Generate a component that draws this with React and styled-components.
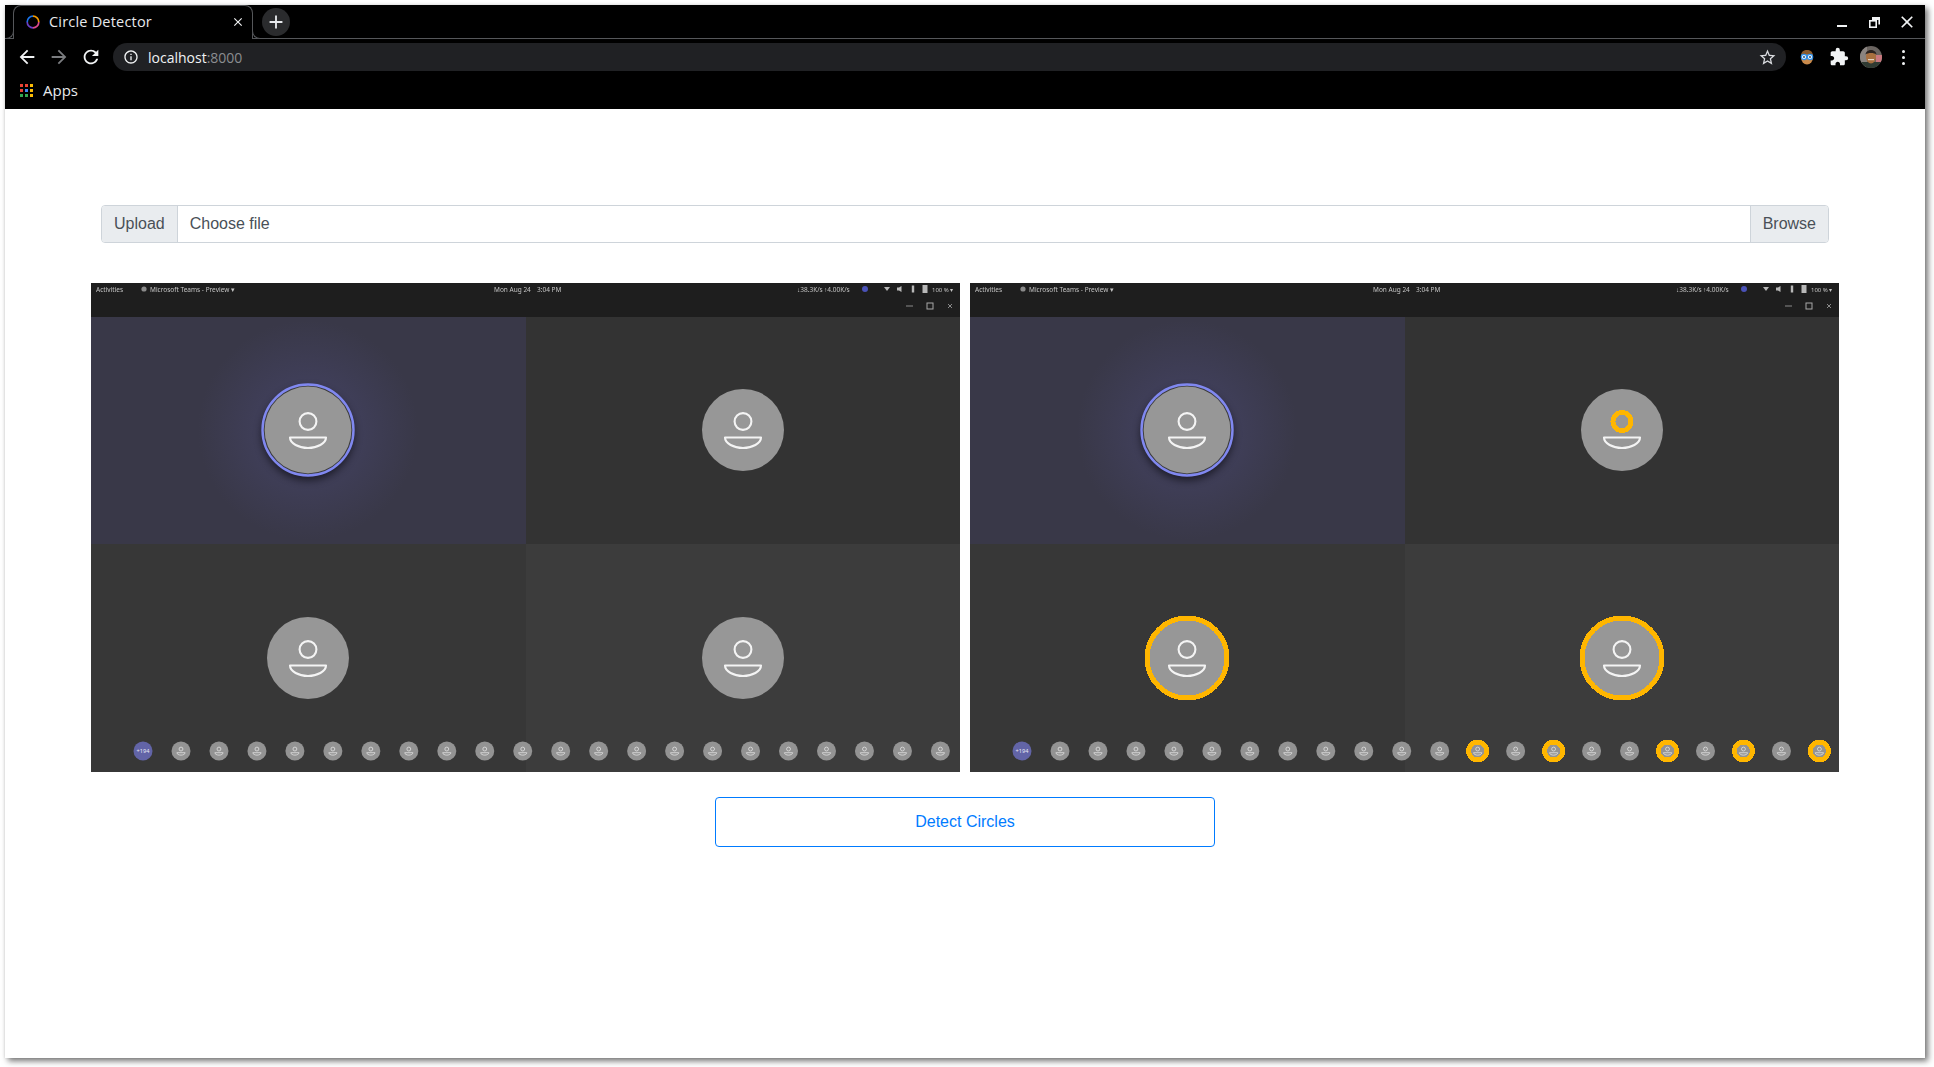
import React from 'react';
import styled, { createGlobalStyle } from 'styled-components';
import { MdArrowBack, MdArrowForward, MdRefresh, MdInfoOutline, MdStarBorder, MdExtension, MdClose, MdAdd } from 'react-icons/md';

const Global = createGlobalStyle`
  html, body { margin: 0; padding: 0; background: #fff; }
  body { width: 1934px; height: 1067px; overflow: hidden; }
`;

const Desktop = styled.div`
  box-sizing: border-box;
  width: 1934px;
  height: 1067px;
  padding: 5px 9px 9px 5px;
  background: #fff;
`;
const Win = styled.div`
  height: 100%;
  display: flex;
  flex-direction: column;
  background: #fff;
  box-shadow: 3px 3px 6px rgba(0,0,0,.55), -1px 0 2px rgba(0,0,0,.06);
`;
const Chrome = styled.header`
  background: #000;
  height: 104px;
  flex: none;
  font-family: "Open Sans", "Noto Sans", sans-serif;
  color: #e8eaed;
`;
const TabStrip = styled.div`
  box-sizing: border-box;
  height: 34px;
  display: flex;
  align-items: flex-start;
  padding-left: 8px;
  border-bottom: 1px solid #55575a;
`;
const Tab = styled.div`
  position: relative;
  box-sizing: border-box;
  width: 240px;
  height: 34px;
  display: flex;
  align-items: center;
  padding: 0 7px 2px 12px;
  background: #000;
  border: 1px solid #55575a;
  border-bottom: none;
  border-radius: 8px 8px 0 0;
  &::before, &::after {
    content: '';
    position: absolute;
    bottom: 0;
    width: 8px;
    height: 8px;
    background: #000;
    border-bottom: 1px solid #55575a;
  }
  &::before { left: -9px; border-right: 1px solid #55575a; border-bottom-right-radius: 8px; }
  &::after { right: -9px; border-left: 1px solid #55575a; border-bottom-left-radius: 8px; }
`;
const TabTitle = styled.span`
  flex: 1;
  margin-left: 9px;
  font-size: 14.5px;
  letter-spacing: .2px;
  white-space: nowrap;
`;
const NewTab = styled.div`
  width: 28px;
  height: 28px;
  margin: 3px 0 0 9px;
  border-radius: 50%;
  background: #2a2b2d;
  display: flex;
  align-items: center;
  justify-content: center;
  color: #e8eaed;
  font-size: 22px;
`;
const WinControls = styled.div`
  margin-left: auto;
  display: flex;
  align-items: center;
  height: 33px;
  padding-right: 8px;
  gap: 14px;
`;
const Toolbar = styled.div`
  height: 36px;
  display: flex;
  align-items: center;
  padding: 0 11px 0 10px;
`;
const NavBtn = styled.div`
  width: 24px;
  height: 24px;
  margin-right: 8px;
  display: flex;
  align-items: center;
  justify-content: center;
  font-size: 22px;
  color: ${p => p.$dim ? '#7b7d80' : '#f1f3f4'};
`;
const Omnibox = styled.div`
  flex: 1;
  height: 28px;
  margin: 0 10px 0 2px;
  border-radius: 14px;
  background: #202124;
  display: flex;
  align-items: center;
  padding: 0 9px 0 10px;
  font-size: 14px;
`;
const Url = styled.span`
  margin-left: 9px;
  color: #f1f3f4;
  flex: 1;
  em { font-style: normal; color: #8b8d90; }
`;
const ToolIcons = styled.div`
  display: flex;
  align-items: center;
  gap: 10px;
`;
const Slot = styled.div`
  width: 22px;
  height: 24px;
  display: flex;
  align-items: center;
  justify-content: center;
  font-size: 22px;
  color: #f1f3f4;
`;
const Dots = styled.div`
  display: flex;
  flex-direction: column;
  gap: 3px;
  i { display: block; width: 3px; height: 3px; background: #f1f3f4; border-radius: 50%; }
`;
const Bookmarks = styled.div`
  height: 30px;
  display: flex;
  align-items: center;
  padding-left: 15px;
  font-size: 15px;
  gap: 10px;
`;
const AppsGrid = styled.div`
  display: grid;
  grid-template-columns: repeat(3, 3px);
  grid-auto-rows: 3px;
  gap: 2px;
`;
const AppsDot = styled.i`
  display: block;
  background: ${p => p.$c};
`;

const Main = styled.main`
  flex: 1;
  display: flex;
  flex-direction: column;
  padding: 96px 86px 0;
  font-family: "Liberation Sans", Arial, sans-serif;
  font-size: 16px;
  line-height: 24px;
`;
const FileGroup = styled.div`
  box-sizing: border-box;
  height: 38px;
  margin: 0 10px 40px;
  display: flex;
  color: #495057;
  border: 1px solid #ced4da;
  border-radius: 4px;
  overflow: hidden;
`;
const Addon = styled.div`
  background: #e9ecef;
  padding: 6px 12px;
  ${p => p.$end ? 'border-left: 1px solid #ced4da;' : 'border-right: 1px solid #ced4da;'}
`;
const FileLabel = styled.div`
  flex: 1;
  padding: 6px 12px;
`;
const Shots = styled.div`
  display: grid;
  grid-template-columns: 869px 869px;
  gap: 10px;
`;
const ShotSvg = styled.svg`
  display: block;
  width: 869px;
  height: 489px;
`;
const Fuzzy = styled.g`
  filter: blur(.4px);
`;
const BarText = styled.text`
  font-family: "Noto Sans", sans-serif;
  font-size: ${p => p.$size || 6.5}px;
  fill: #c4c4c4;
`;
const DetectBtn = styled.button`
  display: block;
  width: 500px;
  height: 50px;
  margin: 25px auto 0;
  background: #fff;
  border: 1px solid #007bff;
  border-radius: 4px;
  color: #007bff;
  font: inherit;
`;

const Favicon = () => (
  <svg width="14" height="14" viewBox="0 0 14 14" fill="none" strokeWidth="1.7">
    <path d="M7 1.2A5.8 5.8 0 0 1 12.8 7" stroke="#f29900" />
    <path d="M12.8 7A5.8 5.8 0 0 1 7 12.8" stroke="#d9488b" />
    <path d="M7 12.8A5.8 5.8 0 0 1 1.2 7" stroke="#6a3fc4" />
    <path d="M1.2 7A5.8 5.8 0 0 1 7 1.2" stroke="#1a73e8" />
  </svg>
);
const MinIcon = () => (
  <svg width="18" height="18" viewBox="0 0 18 18"><rect x="4" y="12" width="10" height="2" fill="#f1f3f4" /></svg>
);
const RestoreIcon = () => (
  <svg width="18" height="18" viewBox="0 0 18 18" fill="none" stroke="#f1f3f4" strokeWidth="1.6">
    <rect x="4.8" y="7.8" width="6.4" height="6.4" />
    <path d="M7.5 4.8h6.7v6.7" />
    <rect x="7" y="4" width="7.2" height="3" fill="#f1f3f4" stroke="none" />
  </svg>
);
const ExtIcon = () => (
  <svg width="16" height="16" viewBox="0 0 16 16">
    <ellipse cx="8" cy="8.5" rx="6" ry="7" fill="#c98a4b" />
    <path d="M2 7C2 2.5 5 1 8 1s6 1.5 6 6C11 5 5 5 2 7z" fill="#8a5a2b" />
    <circle cx="5" cy="8" r="2.7" fill="#e8f4ff" stroke="#2f8fe8" strokeWidth="1.2" />
    <circle cx="11" cy="8" r="2.7" fill="#e8f4ff" stroke="#2f8fe8" strokeWidth="1.2" />
    <circle cx="5" cy="8" r=".9" fill="#23415e" />
    <circle cx="11" cy="8" r=".9" fill="#23415e" />
  </svg>
);
const Profile = () => (
  <svg width="22" height="22" viewBox="0 0 22 22">
    <defs><clipPath id="pf"><circle cx="11" cy="11" r="11" /></clipPath></defs>
    <g clipPath="url(#pf)">
      <rect width="22" height="22" fill="#6a6460" />
      <rect x="0" y="0" width="7" height="22" fill="#8a8480" />
      <rect x="16" y="9" width="6" height="7" fill="#c9787e" />
      <rect x="0" y="16" width="22" height="6" fill="#2f3a32" />
      <ellipse cx="11" cy="11" rx="5" ry="6.5" fill="#a8703f" />
      <path d="M5.5 8.5C6 2.5 16 2.5 16.5 8.5 14 6.5 8 6.5 5.5 8.5z" fill="#2a2320" />
      <rect x="8" y="13" width="6" height="1.2" fill="#e3d6c6" />
    </g>
  </svg>
);

const GOLD = '#ffb600';

const Person = ({ x, y, scale = 1, sw = 2.1, color = '#f4f4f4' }) => (
  <g transform={`translate(${x} ${y}) scale(${scale})`} fill="none" stroke={color} strokeWidth={sw}>
    <circle cx="0" cy="-8.5" r="8.4" />
    <path d="M-18 7.5H18C18 13.5 9 18 0 18S-18 13.5-18 7.5Z" strokeLinejoin="round" />
  </g>
);
const GoldRing = ({ x, y, r, w }) => (
  <circle cx={x} cy={y} r={r} fill="none" stroke={GOLD} strokeWidth={w} shapeRendering="crispEdges" />
);
const BigAvatar = ({ x, y }) => (
  <>
    <circle cx={x} cy={y} r="41" fill="#979797" />
    <Person x={x} y={y} />
  </>
);
const STRIP = Array.from({ length: 21 }, (_, i) => 90 + i * 37.97);
const GOLD_STRIP = [11, 13, 16, 18, 20];
const TRAY = [[796, 'M-3 -2L3 -2L0 2Z'], [809, 'M-3 -1.5H-1L1.5 -3V3L-1 1.5H-3Z'], [822, 'M-1.2 -3.5H1.2V3.5H-1.2Z'], [834, 'M-2.5 -4H2.5V4H-2.5Z']];

const Shot = ({ id, detected }) => (
  <ShotSvg viewBox="0 0 869 489" role="img">
    <defs>
      <radialGradient id={`glow${id}`} gradientUnits="userSpaceOnUse" cx="217" cy="147" r="110">
        <stop offset="0.4" stopColor="#403f5a" />
        <stop offset="1" stopColor="#393848" />
      </radialGradient>
      <filter id={`sh${id}`} x="-40%" y="-40%" width="180%" height="180%"><feGaussianBlur stdDeviation="4" /></filter>
    </defs>
    <rect width="869" height="489" fill="#1e1e1e" />
    <rect x="0" y="34" width="435" height="227" fill="#393848" />
    <rect x="435" y="34" width="434" height="227" fill="#333333" />
    <rect x="0" y="261" width="435" height="228" fill="#373737" />
    <rect x="435" y="261" width="434" height="228" fill="#3c3c3c" />
    <rect x="100" y="34" width="235" height="227" fill={`url(#glow${id})`} />

    <Fuzzy>
      <BarText x="5" y="8.5">Activities</BarText>
      <circle cx="53" cy="6" r="2.6" fill="#8a8a8a" />
      <BarText x="59" y="8.5">Microsoft Teams - Preview ▾</BarText>
      <BarText x="403" y="8.5">Mon Aug 24</BarText>
      <BarText x="446" y="8.5">3:04 PM</BarText>
      <BarText x="706" y="8.5">↓38.3K/s</BarText>
      <BarText x="733" y="8.5">↑4.00K/s</BarText>
      <circle cx="774" cy="6" r="3" fill="#4a52b8" />
      {TRAY.map(([x, d]) => <path key={x} transform={`translate(${x} 6)`} d={d} fill="#b8b8b8" />)}
      <BarText x="841" y="8.5" $size={6}>100 % ▾</BarText>
      <rect x="815" y="22.5" width="7" height="1" fill="#8a8a8a" />
      <rect x="836" y="20" width="6" height="6" fill="none" stroke="#a8a8a8" />
      <path d="M857 21l4 4m0-4l-4 4" stroke="#8a8a8a" />
    </Fuzzy>

    <circle cx="217" cy="151" r="46" fill="#000" opacity=".6" filter={`url(#sh${id})`} />
    <circle cx="217" cy="147" r="45.5" fill="#3a3a3a" stroke="#8088f0" strokeWidth="2.4" />
    <circle cx="217" cy="147" r="43.4" fill="#979797" />
    <Person x={217} y={147} />
    <BigAvatar x={652} y={147} />
    <BigAvatar x={217} y={375} />
    <BigAvatar x={652} y={375} />

    <circle cx="52" cy="468" r="9.5" fill="#6264a7" />
    <BarText x="52" y="470" $size={5.6} textAnchor="middle" style={{ fill: '#e8e8f4' }}>+194</BarText>
    <Fuzzy>
      {STRIP.map((x, i) => (
        <g key={i}>
          <circle cx={x} cy="468" r="9.5" fill="#939393" />
          <Person x={x} y={468} scale={0.23} sw={3.4} color="#e4e4e4" />
        </g>
      ))}
    </Fuzzy>

    {detected && (
      <>
        <GoldRing x={652} y={138.5} r={9} w={5} />
        <GoldRing x={217} y={375} r={40} w={5} />
        <GoldRing x={652} y={375} r={40} w={5} />
        {GOLD_STRIP.map(i => <GoldRing key={i} x={STRIP[i]} y={468} r={9} w={5} />)}
      </>
    )}
  </ShotSvg>
);

const APPS = ['#ea4335', '#ea4335', '#fbbc04', '#ea4335', '#4285f4', '#fbbc04', '#34a853', '#34a853', '#fbbc04'];

export default function App() {
  return (
    <Desktop>
      <Global />
      <Win>
        <Chrome>
          <TabStrip>
            <Tab>
              <Favicon />
              <TabTitle>Circle Detector</TabTitle>
              <MdClose size={14} color="#f1f3f4" />
            </Tab>
            <NewTab><MdAdd /></NewTab>
            <WinControls>
              <MinIcon />
              <RestoreIcon />
              <MdClose size={20} color="#f1f3f4" />
            </WinControls>
          </TabStrip>
          <Toolbar>
            <NavBtn><MdArrowBack /></NavBtn>
            <NavBtn $dim><MdArrowForward /></NavBtn>
            <NavBtn><MdRefresh /></NavBtn>
            <Omnibox>
              <MdInfoOutline size={16} color="#f1f3f4" />
              <Url>localhost<em>:8000</em></Url>
              <MdStarBorder size={19} color="#dadce0" />
            </Omnibox>
            <ToolIcons>
              <Slot><ExtIcon /></Slot>
              <Slot><MdExtension size={20} /></Slot>
              <Slot><Profile /></Slot>
              <Slot><Dots><i /><i /><i /></Dots></Slot>
            </ToolIcons>
          </Toolbar>
          <Bookmarks>
            <AppsGrid>{APPS.map((c, i) => <AppsDot key={i} $c={c} />)}</AppsGrid>
            Apps
          </Bookmarks>
        </Chrome>
        <Main>
          <FileGroup>
            <Addon>Upload</Addon>
            <FileLabel>Choose file</FileLabel>
            <Addon $end>Browse</Addon>
          </FileGroup>
          <Shots>
            <Shot id="a" />
            <Shot id="b" detected />
          </Shots>
          <DetectBtn>Detect Circles</DetectBtn>
        </Main>
      </Win>
    </Desktop>
  );
}
